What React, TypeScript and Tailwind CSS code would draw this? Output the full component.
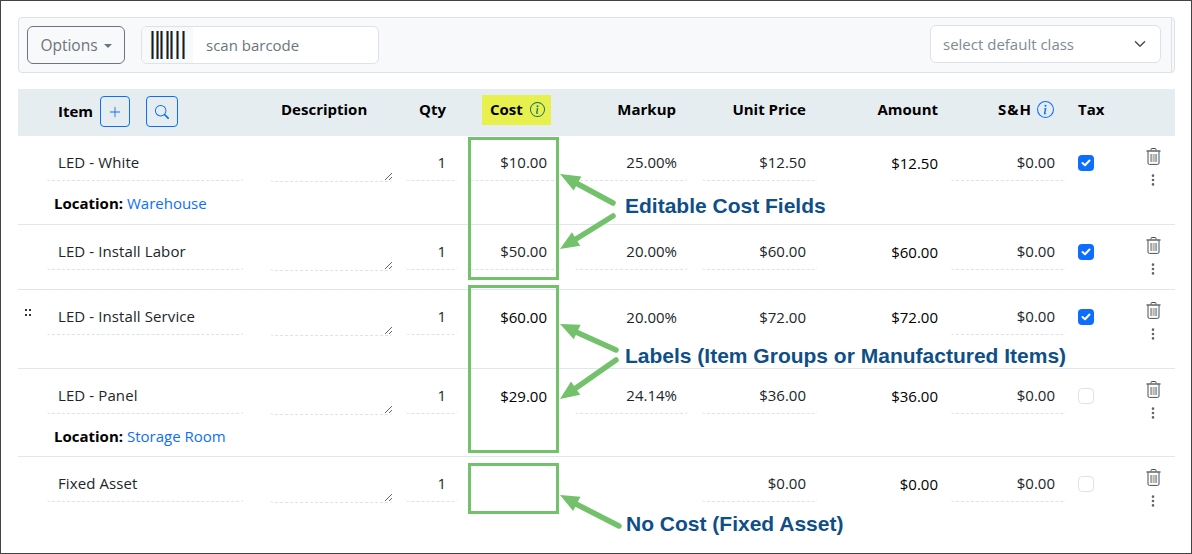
import { BsChevronDown, BsInfoCircle, BsPlusLg, BsSearch, BsThreeDotsVertical } from "react-icons/bs";

const COLS = "grid grid-cols-[28px_212px_141px_64px_102px_129px_129px_122px_128px_56px_46px]";

type Row = {
  name: string;
  qty: string;
  cost: string;
  costEdit: boolean;
  markup: string;
  markupEdit: boolean;
  unit: string;
  unitEdit: boolean;
  amount: string;
  tax: boolean;
  location?: string;
  height: string;
  drag?: boolean;
};

const rows: Row[] = [
  { name: "LED - White", qty: "1", cost: "$10.00", costEdit: true, markup: "25.00%", markupEdit: true, unit: "$12.50", unitEdit: true, amount: "$12.50", tax: true, location: "Warehouse", height: "h-[89px]" },
  { name: "LED - Install Labor", qty: "1", cost: "$50.00", costEdit: true, markup: "20.00%", markupEdit: true, unit: "$60.00", unitEdit: true, amount: "$60.00", tax: true, height: "h-[65px]" },
  { name: "LED - Install Service", qty: "1", cost: "$60.00", costEdit: false, markup: "20.00%", markupEdit: false, unit: "$72.00", unitEdit: false, amount: "$72.00", tax: true, height: "h-[79px]", drag: true },
  { name: "LED - Panel", qty: "1", cost: "$29.00", costEdit: false, markup: "24.14%", markupEdit: true, unit: "$36.00", unitEdit: true, amount: "$36.00", tax: false, location: "Storage Room", height: "h-[88px]" },
  { name: "Fixed Asset", qty: "1", cost: "", costEdit: false, markup: "", markupEdit: false, unit: "$0.00", unitEdit: true, amount: "$0.00", tax: false, height: "h-[88px]" },
];

const Field = ({ children, dashed = true, className = "" }: { children?: React.ReactNode; dashed?: boolean; className?: string }) => (
  <div className={`h-[38px] flex items-center pl-3 pr-[11px] rounded-b-[4px] border-b border-dashed text-[#212529] ${dashed ? "border-[#dee2e6] pt-[2px]" : "border-transparent pt-1"} ${className}`}>
    {children}
  </div>
);

const TrashIcon = () => (
  <svg width="15" height="17" viewBox="0 0 15 17" fill="none" stroke="#4a4f57" strokeWidth="1">
    <path d="M5 2.5 V1.5 Q5 .5 6 .5 H9 Q10 .5 10 1.5 V2.5" />
    <path d="M.5 3 H14.5" strokeWidth="1.3" />
    <path d="M2 3.5 V15 Q2 16.4 3.4 16.4 H11.6 Q13 16.4 13 15 V3.5" />
    <path d="M4.6 6 V14 M7.1 6 V14 M9.6 6 V14" stroke="#d9a066" strokeWidth="1" />
    <path d="M5.6 6 V14 M8.1 6 V14 M10.6 6 V14" stroke="#6aa5dc" strokeWidth="1" />
  </svg>
);

const Barcode = () => (
  <svg width="34" height="28" viewBox="0 0 34 28">
    {[0, 5, 9, 15, 19, 25, 31].map((x) => (
      <g key={x}>
        <rect x={x} y="0" width="1" height="28" fill="#b5773a" />
        <rect x={x + 1} y="0" width="1" height="28" fill="#1c1c1c" />
        <rect x={x + 2} y="0" width="1" height="28" fill="#3b8ad0" />
      </g>
    ))}
  </svg>
);

const Checkbox = ({ on }: { on: boolean }) =>
  on ? (
    <div className="w-4 h-4 rounded-[4px] bg-[#0d6efd] flex items-center justify-center">
      <svg width="10" height="8" viewBox="0 0 10 8" fill="none" stroke="white" strokeWidth="2" strokeLinecap="round" strokeLinejoin="round">
        <path d="M1.5 4 L4 6.2 L8.5 1.5" />
      </svg>
    </div>
  ) : (
    <div className="w-4 h-4 rounded-[4px] border border-[#dee2e6] bg-white" />
  );

const Header = () => (
  <div className={`${COLS} h-[47px] items-center pb-[6px] bg-[#e6edf0] font-bold text-[15px] text-black mt-4`}>
    <div />
    <div className="flex items-center pl-3 mt-[4px]">
      <span>Item</span>
      <button className="ml-[7px] w-[30px] h-[31px] flex items-center justify-center rounded border border-[#0d6efd] text-[#0d6efd]">
        <BsPlusLg size={14} />
      </button>
      <button className="ml-[16px] w-[32px] h-[31px] flex items-center justify-center rounded border border-[#0d6efd] text-[#0d6efd]">
        <BsSearch size={14} />
      </button>
    </div>
    <div className="pl-[23px]">Description</div>
    <div className="text-right pr-[17px]">Qty</div>
    <div className="ml-[19px] w-[69px] h-[30px] bg-[#e8f04e] flex items-center pl-2">
      Cost
      <BsInfoCircle size={15} className="ml-[7px] text-[#0f6e6e]" />
    </div>
    <div className="text-right pr-[18px]">Markup</div>
    <div className="text-right pr-[17px]">Unit Price</div>
    <div className="text-right pr-[7px]">Amount</div>
    <div className="flex items-center justify-end pr-[19px]">
      <span className="tracking-[1px]">S&amp;H</span>
      <BsInfoCircle size={17} className="ml-[5px] text-[#0d6efd]" />
    </div>
    <div className="pl-[5px]">Tax</div>
    <div />
  </div>
);

const ItemRow = ({ row, last }: { row: Row; last: boolean }) => (
  <div className={`${row.height} ${last ? "" : "border-b border-[#dee6f0]"}`}>
    <div className={`${COLS} pt-[7px]`}>
      <div>
        {row.drag && (
          <div className="grid grid-cols-2 gap-x-[2px] gap-y-[3px] w-[6px] ml-[7px] mt-[12px]">
            <div className="w-[2px] h-[2px] bg-[#333]" />
            <div className="w-[2px] h-[2px] bg-[#333]" />
            <div className="w-[2px] h-[2px] bg-[#333]" />
            <div className="w-[2px] h-[2px] bg-[#333]" />
          </div>
        )}
      </div>
      <Field className="w-[198px] tracking-[0.1px]">{row.name}</Field>
      <div className="pl-3">
        <textarea
          readOnly
          className="block w-[123px] h-[39px] rounded-b-[4px] border-b border-dashed border-[#dee2e6] outline-none"
        />
      </div>
      <div className="pl-[6px]">
        <Field className="w-[52px] justify-end">{row.qty}</Field>
      </div>
      <div className="pl-[6px]">
        <Field dashed={row.costEdit} className={`w-[90px] justify-end !pr-3 ${row.costEdit ? "" : "text-black"}`}>
          {row.cost}
        </Field>
      </div>
      <div className="pl-[9px]">
        <Field dashed={row.markupEdit} className="w-[114px] justify-end">{row.markup}</Field>
      </div>
      <div className="pl-[7px]">
        <Field dashed={row.unitEdit} className="w-[116px] justify-end">{row.unit}</Field>
      </div>
      <div className="h-[38px] flex items-center justify-end pr-[7px] pt-[3px] text-black">{row.amount}</div>
      <div className="pl-[5px]">
        <Field className="w-[116px] justify-end">$0.00</Field>
      </div>
      <div className="pl-[5px] pt-[12px]">
        <Checkbox on={row.tax} />
      </div>
      <div className="flex flex-col items-center pt-[5px] pl-[2px]">
        <TrashIcon />
        <BsThreeDotsVertical size={14} className="mt-[8px] text-[#5f6670]" />
      </div>
    </div>
    {row.location && (
      <div className="pl-9 mt-[5px] leading-[22px] text-[15px]">
        <span className="font-bold text-black">Location:</span>{" "}
        <span className="text-[#0d6efd]">{row.location}</span>
      </div>
    )}
  </div>
);

const Arrows = () => {
  const green = "#73c16b";
  const arrows = [
    { shaft: "M612 202 L575 182", head: "559,173 580.4,175.6 572.7,189.6" },
    { shaft: "M612 215 L575 238", head: "559,248 579.3,244.8 570.9,231.2" },
    { shaft: "M615 349 L575 331", head: "559,323 579.6,323.7 572.8,338.3" },
    { shaft: "M615 359 L575 387", head: "559,398 579.2,393.8 570,380.6" },
    { shaft: "M618 525 L575 503", head: "559,494 579.5,495.7 572.1,509.9" },
  ];
  return (
    <svg className="absolute inset-0 pointer-events-none" width="1192" height="554" viewBox="0 0 1192 554">
      {arrows.map((a) => (
        <g key={a.head}>
          <path d={a.shaft} stroke={green} strokeWidth="5.5" strokeLinecap="round" fill="none" />
          <polygon points={a.head} fill={green} />
        </g>
      ))}
    </svg>
  );
};

const Note = ({ className, children }: { className: string; children: React.ReactNode }) => (
  <div className={`absolute font-['Liberation_Sans'] font-bold text-[21px] leading-6 text-[#0f4f88] whitespace-nowrap ${className}`}>
    {children}
  </div>
);

export default function App() {
  return (
    <div className="relative w-[1192px] h-[554px] overflow-hidden border border-[#444] bg-white font-['Open_Sans',sans-serif] text-[15px]">
      <div className="ml-[17px] mt-4 w-[1157px]">
        <div className="h-[56px] flex items-center pl-2 pr-[2px] rounded border border-[#dee2e6] bg-[#f8f9fa]">
          <button className="w-[98px] h-[38px] flex items-center justify-center rounded-md border border-[#6c757d] text-[#6c757d] text-[15.5px] pt-px">
            Options
            <span className="ml-[6px] border-x-[4px] border-t-[4px] border-x-transparent border-t-[#6c757d]" />
          </button>
          <div className="ml-4 w-[238px] h-[38px] flex items-center rounded-md border border-[#dee2e6] bg-white overflow-hidden">
            <div className="w-[51px] h-full flex items-center justify-center bg-[#f8f9fa]">
              <Barcode />
            </div>
            <span className="ml-[13px] text-[#6c757d]">scan barcode</span>
          </div>
          <div className="ml-auto mb-[2px] w-[231px] h-[38px] flex items-center justify-between pl-3 pr-[14px] rounded-md border border-[#dee2e6] bg-white text-[#808a93]">
            select default class
            <BsChevronDown size={12} strokeWidth={1} className="text-[#343a40]" />
          </div>
          <div className="ml-[10px] w-px self-stretch bg-[#dee2e6]" />
        </div>
        <Header />
        {rows.map((r, i) => (
          <ItemRow key={r.name} row={r} last={i === rows.length - 1} />
        ))}
      </div>

      <div className="absolute left-[467px] top-[136px] w-[91px] h-[143px] border-[3px] border-[#73c16b]" />
      <div className="absolute left-[467px] top-[284px] w-[91px] h-[168px] border-[3px] border-[#73c16b]" />
      <div className="absolute left-[467px] top-[462px] w-[91px] h-[51px] border-[3px] border-[#73c16b]" />
      <Arrows />
      <Note className="left-[624px] top-[193px]">Editable Cost Fields</Note>
      <Note className="left-[624px] top-[343px]">Labels (Item Groups or Manufactured Items)</Note>
      <Note className="left-[625px] top-[511px]">No Cost (Fixed Asset)</Note>
    </div>
  );
}
